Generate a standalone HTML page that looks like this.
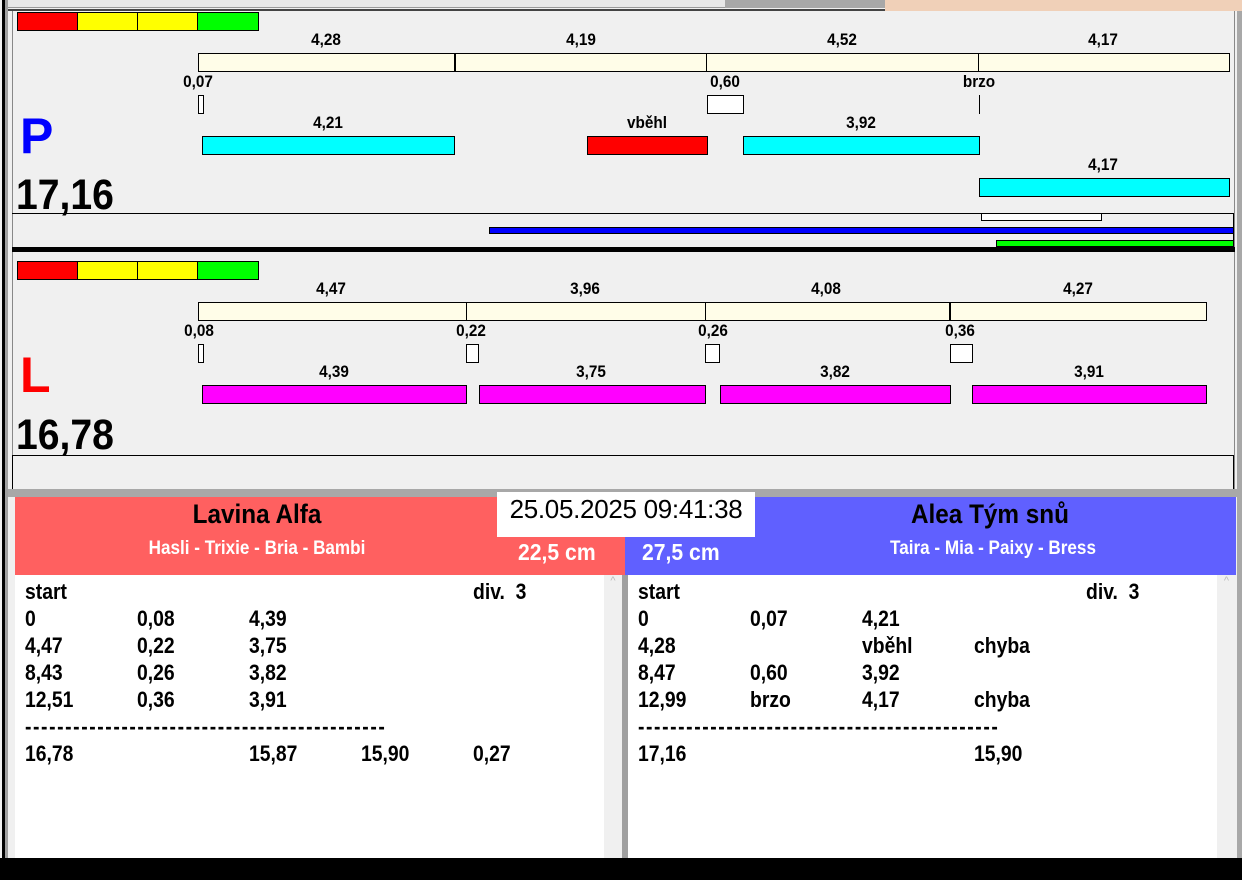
<!DOCTYPE html>
<html><head><meta charset="utf-8"><style>
*{margin:0;padding:0;box-sizing:border-box}
body{width:1242px;height:880px;position:relative;overflow:hidden;background:#f0f0f0;font-family:"Liberation Sans",sans-serif;font-weight:bold;color:#000}
.a{position:absolute}
.b{position:absolute;border:1px solid #000}
.l{position:absolute;font-size:17px;transform:translateX(-50%) scaleX(0.9);white-space:nowrap;line-height:16px}
.row{position:absolute;font-size:22px;line-height:27px;white-space:nowrap}
.row span{position:absolute;top:0;transform:scaleX(0.88);transform-origin:left}
</style></head><body>
<div class="a" style="left:2px;top:0;width:3px;height:860px;background:#000"></div>
<div class="a" style="left:5px;top:0;width:3px;height:860px;background:#a0a0a0"></div>
<div class="a" style="left:1237px;top:0;width:5px;height:860px;background:#a8a8a8"></div>
<div class="a" style="left:8px;top:0;width:877px;height:8px;background:#e8e8e8;border-bottom:1px solid #999"></div>
<div class="a" style="left:725px;top:0;width:160px;height:8px;background:#a8a8a8"></div>
<div class="a" style="left:8px;top:9px;width:877px;height:2px;background:#444"></div>
<div class="a" style="left:885px;top:0;width:357px;height:11px;background:#f0d0b8"></div>

<div class="a" style="left:12px;top:11px;width:1223px;height:237px;border-left:1px solid #888;border-right:1px solid #888"></div>
<div class="b" style="left:17px;top:12px;width:61px;height:19px;background:#f00"></div>
<div class="b" style="left:77px;top:12px;width:61px;height:19px;background:#ff0"></div>
<div class="b" style="left:137px;top:12px;width:61px;height:19px;background:#ff0"></div>
<div class="b" style="left:197px;top:12px;width:62px;height:19px;background:#0f0"></div>

<div class="b" style="left:198px;top:53px;width:1032px;height:19px;background:#fffde8"></div>
<div class="a" style="left:454px;top:53px;width:2px;height:19px;background:#000"></div>
<div class="a" style="left:706px;top:53px;width:1px;height:19px;background:#000"></div>
<div class="a" style="left:978px;top:53px;width:1px;height:19px;background:#000"></div>
<div class="l" style="left:326px;top:32px">4,28</div>
<div class="l" style="left:581px;top:32px">4,19</div>
<div class="l" style="left:842px;top:32px">4,52</div>
<div class="l" style="left:1103px;top:32px">4,17</div>
<div class="l" style="left:198px;top:74px">0,07</div>
<div class="l" style="left:725px;top:74px">0,60</div>
<div class="l" style="left:979px;top:74px">brzo</div>
<div class="b" style="left:198px;top:95px;width:6px;height:19px;background:#fff"></div>
<div class="b" style="left:707px;top:95px;width:37px;height:19px;background:#fff"></div>
<div class="a" style="left:979px;top:95px;width:1px;height:19px;background:#000"></div>
<div class="l" style="left:328px;top:115px">4,21</div>
<div class="l" style="left:647px;top:115px">vběhl</div>
<div class="l" style="left:861px;top:115px">3,92</div>
<div class="b" style="left:202px;top:136px;width:253px;height:19px;background:#0ff"></div>
<div class="b" style="left:587px;top:136px;width:121px;height:19px;background:#f00"></div>
<div class="b" style="left:743px;top:136px;width:237px;height:19px;background:#0ff"></div>
<div class="l" style="left:1103px;top:157px">4,17</div>
<div class="b" style="left:979px;top:178px;width:251px;height:19px;background:#0ff"></div>
<div class="a" style="left:20px;top:106px;font-size:50px;color:#0000ff;line-height:60px">P</div>
<div class="a" style="left:16px;top:171px;font-size:43px;line-height:48px;transform:scaleX(0.91);transform-origin:left">17,16</div>
<div class="a" style="left:12px;top:213px;width:1222px;height:35px;border-top:1px solid #000;border-right:1px solid #000"></div>
<div class="b" style="left:981px;top:213px;width:121px;height:8px;background:#fff"></div>
<div class="b" style="left:489px;top:227px;width:745px;height:7px;background:#00f"></div>
<div class="b" style="left:996px;top:240px;width:238px;height:7px;background:#0f0"></div>
<div class="a" style="left:12px;top:247px;width:1223px;height:5px;background:#000"></div>

<div class="a" style="left:12px;top:252px;width:1223px;height:238px;border-left:1px solid #888;border-right:1px solid #888"></div>
<div class="b" style="left:17px;top:261px;width:61px;height:19px;background:#f00"></div>
<div class="b" style="left:77px;top:261px;width:61px;height:19px;background:#ff0"></div>
<div class="b" style="left:137px;top:261px;width:61px;height:19px;background:#ff0"></div>
<div class="b" style="left:197px;top:261px;width:62px;height:19px;background:#0f0"></div>
<div class="b" style="left:198px;top:302px;width:1009px;height:19px;background:#fffde8"></div>
<div class="a" style="left:466px;top:302px;width:1px;height:19px;background:#000"></div>
<div class="a" style="left:705px;top:302px;width:1px;height:19px;background:#000"></div>
<div class="a" style="left:949px;top:302px;width:2px;height:19px;background:#000"></div>
<div class="l" style="left:331px;top:281px">4,47</div>
<div class="l" style="left:585px;top:281px">3,96</div>
<div class="l" style="left:826px;top:281px">4,08</div>
<div class="l" style="left:1078px;top:281px">4,27</div>
<div class="l" style="left:199px;top:323px">0,08</div>
<div class="l" style="left:471px;top:323px">0,22</div>
<div class="l" style="left:713px;top:323px">0,26</div>
<div class="l" style="left:960px;top:323px">0,36</div>
<div class="b" style="left:198px;top:344px;width:6px;height:19px;background:#fff"></div>
<div class="b" style="left:466px;top:344px;width:13px;height:19px;background:#fff"></div>
<div class="b" style="left:705px;top:344px;width:15px;height:19px;background:#fff"></div>
<div class="b" style="left:950px;top:344px;width:23px;height:19px;background:#fff"></div>
<div class="l" style="left:334px;top:364px">4,39</div>
<div class="l" style="left:591px;top:364px">3,75</div>
<div class="l" style="left:835px;top:364px">3,82</div>
<div class="l" style="left:1089px;top:364px">3,91</div>
<div class="b" style="left:202px;top:385px;width:265px;height:19px;background:#f0f"></div>
<div class="b" style="left:479px;top:385px;width:227px;height:19px;background:#f0f"></div>
<div class="b" style="left:720px;top:385px;width:231px;height:19px;background:#f0f"></div>
<div class="b" style="left:972px;top:385px;width:235px;height:19px;background:#f0f"></div>
<div class="a" style="left:20px;top:345px;font-size:50px;color:#ff0000;line-height:60px">L</div>
<div class="a" style="left:16px;top:411px;font-size:43px;line-height:48px;transform:scaleX(0.91);transform-origin:left">16,78</div>
<div class="a" style="left:12px;top:455px;width:1222px;height:35px;border-top:1px solid #000;border-right:1px solid #000;border-left:1px solid #000"></div>

<div class="a" style="left:8px;top:489px;width:1229px;height:8px;background:#a8a8a8"></div>
<div class="a" style="left:15px;top:497px;width:610px;height:78px;background:#ff6060"></div>
<div class="a" style="left:625px;top:497px;width:611px;height:78px;background:#6060ff"></div>
<div class="a" style="left:497px;top:492px;width:258px;height:45px;background:#fff;font-weight:normal;font-size:26px;line-height:34px;text-align:center;letter-spacing:-0.3px">25.05.2025 09:41:38</div>
<div class="l" style="left:257px;top:500px;font-size:27px;line-height:28px">Lavina Alfa</div>
<div class="l" style="left:990px;top:500px;font-size:27px;line-height:28px">Alea Tým snů</div>
<div class="l" style="left:257px;top:539px;font-size:19px;line-height:20px;color:#fff">Hasli - Trixie - Bria - Bambi</div>
<div class="l" style="left:993px;top:539px;font-size:19px;line-height:20px;color:#fff">Taira - Mia - Paixy - Bress</div>
<div class="a" style="left:518px;top:539px;font-size:23px;line-height:26px;color:#fff;transform:scaleX(0.92);transform-origin:left">22,5 cm</div>
<div class="a" style="left:642px;top:539px;font-size:23px;line-height:26px;color:#fff;transform:scaleX(0.92);transform-origin:left">27,5 cm</div>

<div class="a" style="left:15px;top:575px;width:589px;height:283px;background:#fff"></div>
<div class="a" style="left:604px;top:575px;width:18px;height:283px;background:#f0f0f0;color:#bbb;font-size:11px;text-align:center;font-weight:normal">^</div>
<div class="a" style="left:622px;top:575px;width:6px;height:283px;background:#a0a0a0"></div>
<div class="a" style="left:628px;top:575px;width:589px;height:283px;background:#fff"></div>
<div class="a" style="left:1217px;top:575px;width:19px;height:283px;background:#f0f0f0;color:#bbb;font-size:11px;text-align:center;font-weight:normal">^</div>
<div class="a" style="left:0;top:858px;width:1242px;height:22px;background:#000"></div>

<div class="row" style="left:25px;top:578px"><span style="left:0">start</span><span style="left:448px">div.&nbsp; 3</span></div>
<div class="row" style="left:25px;top:605px"><span style="left:0">0</span><span style="left:112px">0,08</span><span style="left:224px">4,39</span></div>
<div class="row" style="left:25px;top:632px"><span style="left:0">4,47</span><span style="left:112px">0,22</span><span style="left:224px">3,75</span></div>
<div class="row" style="left:25px;top:659px"><span style="left:0">8,43</span><span style="left:112px">0,26</span><span style="left:224px">3,82</span></div>
<div class="row" style="left:25px;top:686px"><span style="left:0">12,51</span><span style="left:112px">0,36</span><span style="left:224px">3,91</span></div>
<div class="row" style="left:25px;top:713px"><span style="left:0;letter-spacing:1.8px">---------------------------------------------</span></div>
<div class="row" style="left:25px;top:740px"><span style="left:0">16,78</span><span style="left:224px">15,87</span><span style="left:336px">15,90</span><span style="left:448px">0,27</span></div>

<div class="row" style="left:638px;top:578px"><span style="left:0">start</span><span style="left:448px">div.&nbsp; 3</span></div>
<div class="row" style="left:638px;top:605px"><span style="left:0">0</span><span style="left:112px">0,07</span><span style="left:224px">4,21</span></div>
<div class="row" style="left:638px;top:632px"><span style="left:0">4,28</span><span style="left:224px">vběhl</span><span style="left:336px">chyba</span></div>
<div class="row" style="left:638px;top:659px"><span style="left:0">8,47</span><span style="left:112px">0,60</span><span style="left:224px">3,92</span></div>
<div class="row" style="left:638px;top:686px"><span style="left:0">12,99</span><span style="left:112px">brzo</span><span style="left:224px">4,17</span><span style="left:336px">chyba</span></div>
<div class="row" style="left:638px;top:713px"><span style="left:0;letter-spacing:1.8px">---------------------------------------------</span></div>
<div class="row" style="left:638px;top:740px"><span style="left:0">17,16</span><span style="left:336px">15,90</span></div>
</body></html>
